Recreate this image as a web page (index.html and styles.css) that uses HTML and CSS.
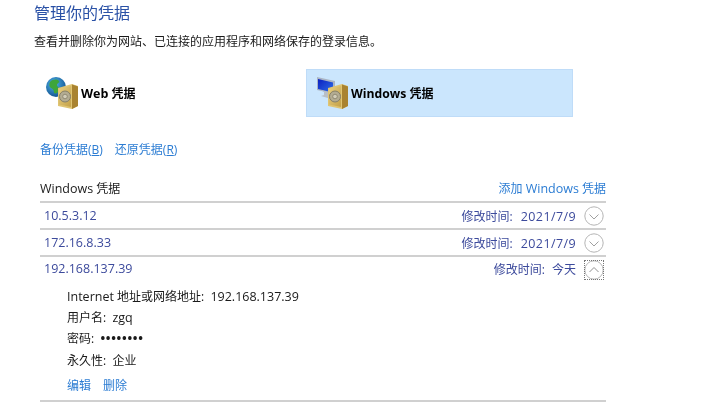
FILE: index.html
```html
<!DOCTYPE html>
<html lang="zh-CN">
<head>
<meta charset="utf-8">
<title>凭据管理器</title>
<link rel="stylesheet" href="styles.css">
</head>
<body>
<main class="page">
  <h1 class="title">管理你的凭据</h1>
  <p class="desc">查看并删除你为网站、已连接的应用程序和网络保存的登录信息。</p>
  <div class="tabs">
    <div class="tab">
      <svg class="tab-icon" viewBox="0 0 36 36" width="36" height="36">
        <defs>
          <radialGradient id="globe" cx="0.4" cy="0.35" r="0.7"><stop offset="0" stop-color="#4fb4e8"/><stop offset="1" stop-color="#10508f"/></radialGradient>
          <linearGradient id="safe1" x1="0" y1="0" x2="1" y2="1"><stop offset="0" stop-color="#e8cf80"/><stop offset="1" stop-color="#c4a148"/></linearGradient>
        </defs>
        <circle cx="11" cy="12" r="10" fill="url(#globe)"/>
        <path d="M5 7c3-3 7-3 9-1 1 2-2 2-2 4s3 2 2 5-3 4-5 3c0-3-1-4-3-5-2-1-2-4-1-6z" fill="#3ea53a"/>
        <path d="M13 13l14-4 6 2v20l-6 3-14-3z" fill="#dfc472"/>
        <path d="M27 9.500l6 2v19.500l-6 3z" fill="#a98330"/>
        <path d="M14 14l12-3v21l-12-2.500z" fill="url(#safe1)"/>
        <circle cx="20" cy="21.500" r="5.500" fill="#b3ac92" stroke="#857f68" stroke-width="1"/>
        <circle cx="20" cy="21.500" r="2.300" fill="#d2cdb8" stroke="#857f68" stroke-width=".8"/>
      </svg>
      <span class="tab-label"><span class="latin">Web</span> 凭据</span>
    </div>
    <div class="tab tab-active">
      <svg class="tab-icon" viewBox="0 0 36 36" width="36" height="36">
        <defs>
          <linearGradient id="screen" x1="0" y1="0" x2="1" y2="1"><stop offset="0" stop-color="#0a1fc0"/><stop offset="1" stop-color="#2f6fe8"/></linearGradient>
          <linearGradient id="safe2" x1="0" y1="0" x2="1" y2="1"><stop offset="0" stop-color="#e8cf80"/><stop offset="1" stop-color="#c4a148"/></linearGradient>
        </defs>
        <path d="M1 2l18 4v13L1 15z" fill="#aab4c4"/>
        <path d="M2 4l15 3.500v10L2 14z" fill="url(#screen)"/>
        <path d="M5 15l7 2v3l3 1v3l-10-3 3-1v-3z" fill="#b9bfc6"/>
        <path d="M12 13l14-4 6 2v20l-6 3-14-3z" fill="#dfc472"/>
        <path d="M26 9.500l6 2v19.500l-6 3z" fill="#a98330"/>
        <path d="M13 14l12-3v21l-12-2.500z" fill="url(#safe2)"/>
        <circle cx="19" cy="21.500" r="5.500" fill="#b3ac92" stroke="#857f68" stroke-width="1"/>
        <circle cx="19" cy="21.500" r="2.300" fill="#d2cdb8" stroke="#857f68" stroke-width=".8"/>
      </svg>
      <span class="tab-label tab-label-tight"><span class="latin">Windows</span> 凭据</span>
    </div>
  </div>
  <nav class="backup">
    <a class="link">备份凭据(<u>B</u>)</a>
    <a class="link">还原凭据(<u>R</u>)</a>
  </nav>
  <section class="vault">
    <header class="vault-head">
      <span><span class="latin">Windows</span> 凭据</span>
      <a class="link">添加 <span class="latin">Windows</span> 凭据</a>
    </header>
    <div class="row">
      <span class="name latin">10.5.3.12</span>
      <span class="meta">修改时间:<span class="date">2021/7/9</span></span>
      <svg class="toggle" viewBox="0 0 20 20" width="20" height="20"><circle cx="10" cy="10" r="9.200" fill="none" stroke="#b5b5b5"/><path d="M5.500 8.500L10 13l4.500-4.500" fill="none" stroke="#a0a0a0"/></svg>
    </div>
    <div class="row">
      <span class="name latin">172.16.8.33</span>
      <span class="meta">修改时间:<span class="date">2021/7/9</span></span>
      <svg class="toggle" viewBox="0 0 20 20" width="20" height="20"><circle cx="10" cy="10" r="9.200" fill="none" stroke="#b5b5b5"/><path d="M5.500 8.500L10 13l4.500-4.500" fill="none" stroke="#a0a0a0"/></svg>
    </div>
    <div class="row row-open">
      <span class="name latin">192.168.137.39</span>
      <span class="meta">修改时间:<span class="today">今天</span></span>
      <span class="focus"><svg class="toggle" viewBox="0 0 20 20" width="20" height="20"><circle cx="10" cy="10" r="9.200" fill="none" stroke="#b5b5b5"/><path d="M5.500 12L10 7.500l4.500 4.500" fill="none" stroke="#909090"/></svg></span>
    </div>
    <div class="detail">
      <div class="field"><span class="latin">Internet</span> 地址或网络地址:&nbsp; <span class="latin">192.168.137.39</span></div>
      <div class="field">用户名:&nbsp; <span class="latin">zgq</span></div>
      <div class="field">密码:&nbsp; <span class="dots">••••••••</span></div>
      <div class="field">永久性:&nbsp; 企业</div>
      <div class="actions"><a class="link">编辑</a><a class="link">删除</a></div>
    </div>
  </section>
</main>
</body>
</html>
```
FILE: styles.css
```css
* { box-sizing: border-box; }
html, body { margin: 0; padding: 0; background: #fff; }
body {
  font-family: "Open Sans", "Noto Sans CJK SC", sans-serif;
  font-size: 12px;
  color: #1a1a1a;
  width: 701px;
  height: 404px;
  overflow: hidden;
}
.page { padding: 2px 95px 0 34px; filter: blur(0.4px); }
.latin { font-size: 12.5px; }
.title { margin: 0; font-size: 16px; font-weight: 400; line-height: 22px; color: #2a51a6; }
.desc { margin: 7px 0 0; line-height: 22px; height: 22px; }
.tabs { display: flex; margin-top: 16px; margin-left: 6px; }
.tab { width: 266px; height: 48px; display: flex; align-items: center; padding-left: 5px; }
.tab-active {
  width: 267px;
  background: #cbe6fd;
  border: 1px solid #bfdcf8;
  padding-left: 9px;
}
.tab-icon { flex: none; }
.tab-label { font-weight: 700; color: #000; }
.tab-label-tight { margin-left: -1px; }
.tab-label-tight .latin { font-size: 12.2px; }
.backup { display: flex; gap: 12px; margin: 23px 0 0 6px; line-height: 20px; }
.link { color: #2b7cd3; text-decoration: none; }
.vault { margin: 16px 0 0 6px; width: 566px; }
.vault-head {
  display: flex;
  justify-content: space-between;
  align-items: center;
  height: 27px;
  padding-bottom: 1px;
  border-bottom: 2px solid #d0d0d0;
}
.row {
  display: flex;
  align-items: center;
  height: 27px;
  padding: 0 2px 0 4px;
  border-bottom: 2px solid #d0d0d0;
  color: #3c4a9c;
}
.row-open { border-bottom: 0; height: 26px; }
.row-open .name, .row-open .meta { padding-bottom: 3px; }
.name { flex: 1; }
.meta { margin-right: 8px; }
.date { margin-left: 8px; font-size: 12.5px; letter-spacing: 0.4px; }
.today { margin-left: 7px; }
.toggle { display: block; }
.focus { display: block; outline: 1px dotted #777; outline-offset: -1px; }
.detail {
  padding: 2.5px 0 0 27px;
  border-bottom: 2px solid #d0d0d0;
  height: 119px;
}
.field { line-height: 21.400px; }
.dots { font-weight: 700; font-size: 12.500px; letter-spacing: 0.7px; }
.actions { display: flex; gap: 12px; margin-top: 4.500px; line-height: 20px; }
```
